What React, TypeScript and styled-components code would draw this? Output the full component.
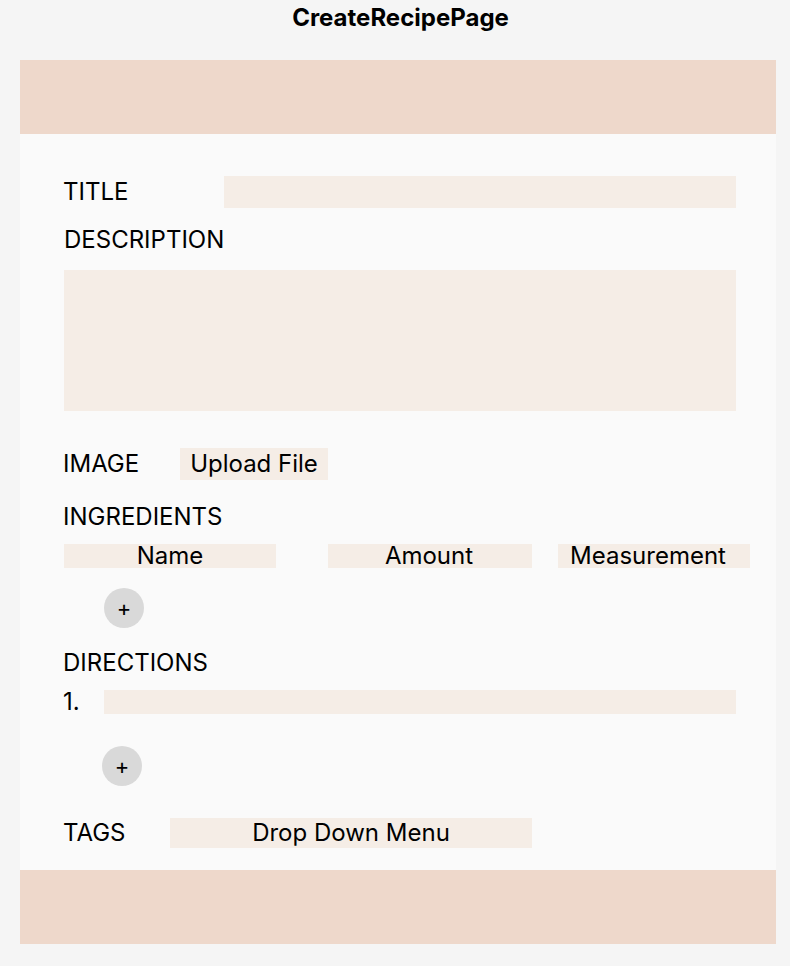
import React from 'react';
import styled, { createGlobalStyle } from 'styled-components';

const GlobalStyle = createGlobalStyle`
  html, body {
    margin: 0;
    padding: 0;
    background: #f5f5f5;
  }
  body {
    font-family: Inter, "Noto Sans", "Liberation Sans", sans-serif;
    color: #000;
  }
`;

const Page = styled.div`
  width: 790px;
  height: 966px;
  background: #f5f5f5;
  padding: 0 14px 0 20px;
  box-sizing: border-box;
`;

const PageTitle = styled.h1`
  margin: 0;
  height: 60px;
  padding: 6px 0 0 5px;
  box-sizing: border-box;
  font-size: 24px;
  line-height: 24px;
  font-weight: 700;
  text-align: center;
`;

const Frame = styled.div`
  width: 756px;
  display: flex;
  flex-direction: column;
`;

const Band = styled.div`
  height: 74px;
  background: #eed8cb;
`;

const Body = styled.form`
  height: 736px;
  background: #fafafa;
  padding: 42px 0 0 43px;
  box-sizing: border-box;
  display: flex;
  flex-direction: column;
  align-items: flex-start;
  font-size: 24px;
  line-height: 24px;
`;

const Row = styled.div<{ $top?: number; $height: number }>`
  display: flex;
  align-items: center;
  margin-top: ${(p) => p.$top ?? 0}px;
  height: ${(p) => p.$height}px;
`;

const Label = styled.span<{ $width?: number }>`
  width: ${(p) => (p.$width ? `${p.$width}px` : 'auto')};
  flex-shrink: 0;
`;

const BlockLabel = styled.div<{ $top: number; $left?: number }>`
  margin-top: ${(p) => p.$top}px;
  margin-left: ${(p) => p.$left ?? 0}px;
  height: 24px;
`;

const Field = styled.div<{ $width: number; $height: number; $left?: number; $shift?: number }>`
  width: ${(p) => p.$width}px;
  height: ${(p) => p.$height}px;
  margin-left: ${(p) => p.$left ?? 0}px;
  padding-right: ${(p) => p.$shift ?? 0}px;
  background: #f5ede6;
  display: flex;
  align-items: center;
  justify-content: center;
  flex-shrink: 0;
  box-sizing: border-box;
  white-space: nowrap;
`;

const TextArea = styled.div`
  margin-top: 18px;
  margin-left: 1px;
  width: 672px;
  height: 141px;
  background: #f5ede6;
`;

const PlusButton = styled.button<{ $top: number; $left: number }>`
  margin-top: ${(p) => p.$top}px;
  margin-left: ${(p) => p.$left}px;
  width: 40px;
  height: 40px;
  border-radius: 50%;
  border: none;
  padding: 0;
  background: #d9d9d9;
  font-family: Inter, "Noto Sans", sans-serif;
  font-size: 22px;
  line-height: 1;
  color: #000;
  display: flex;
  align-items: center;
  justify-content: center;
`;

export default function App() {
  return (
    <>
      <GlobalStyle />
      <Page>
        <PageTitle>CreateRecipePage</PageTitle>
        <Frame>
          <Band />
          <Body>
            <Row $height={32}>
              <Label $width={161}>TITLE</Label>
              <Field $width={512} $height={32} />
            </Row>

            <BlockLabel $top={20} $left={1}>DESCRIPTION</BlockLabel>
            <TextArea />

            <Row $top={37} $height={32}>
              <Label $width={117}>IMAGE</Label>
              <Field $width={148} $height={32}>Upload File</Field>
            </Row>

            <BlockLabel $top={25}>INGREDIENTS</BlockLabel>
            <Row $top={15} $height={24}>
              <Field $width={212} $height={24} $left={1}>Name</Field>
              <Field $width={204} $height={24} $left={52} $shift={2}>Amount</Field>
              <Field $width={192} $height={24} $left={26} $shift={12}>Measurement</Field>
            </Row>
            <PlusButton type="button" $top={20} $left={41}>+</PlusButton>

            <BlockLabel $top={23}>DIRECTIONS</BlockLabel>
            <Row $top={15} $height={24}>
              <Label $width={41}>1.</Label>
              <Field $width={632} $height={24} />
            </Row>
            <PlusButton type="button" $top={32} $left={39}>+</PlusButton>

            <Row $top={32} $height={30}>
              <Label $width={107}>TAGS</Label>
              <Field $width={362} $height={30}>Drop Down Menu</Field>
            </Row>
          </Body>
          <Band />
        </Frame>
      </Page>
    </>
  );
}
